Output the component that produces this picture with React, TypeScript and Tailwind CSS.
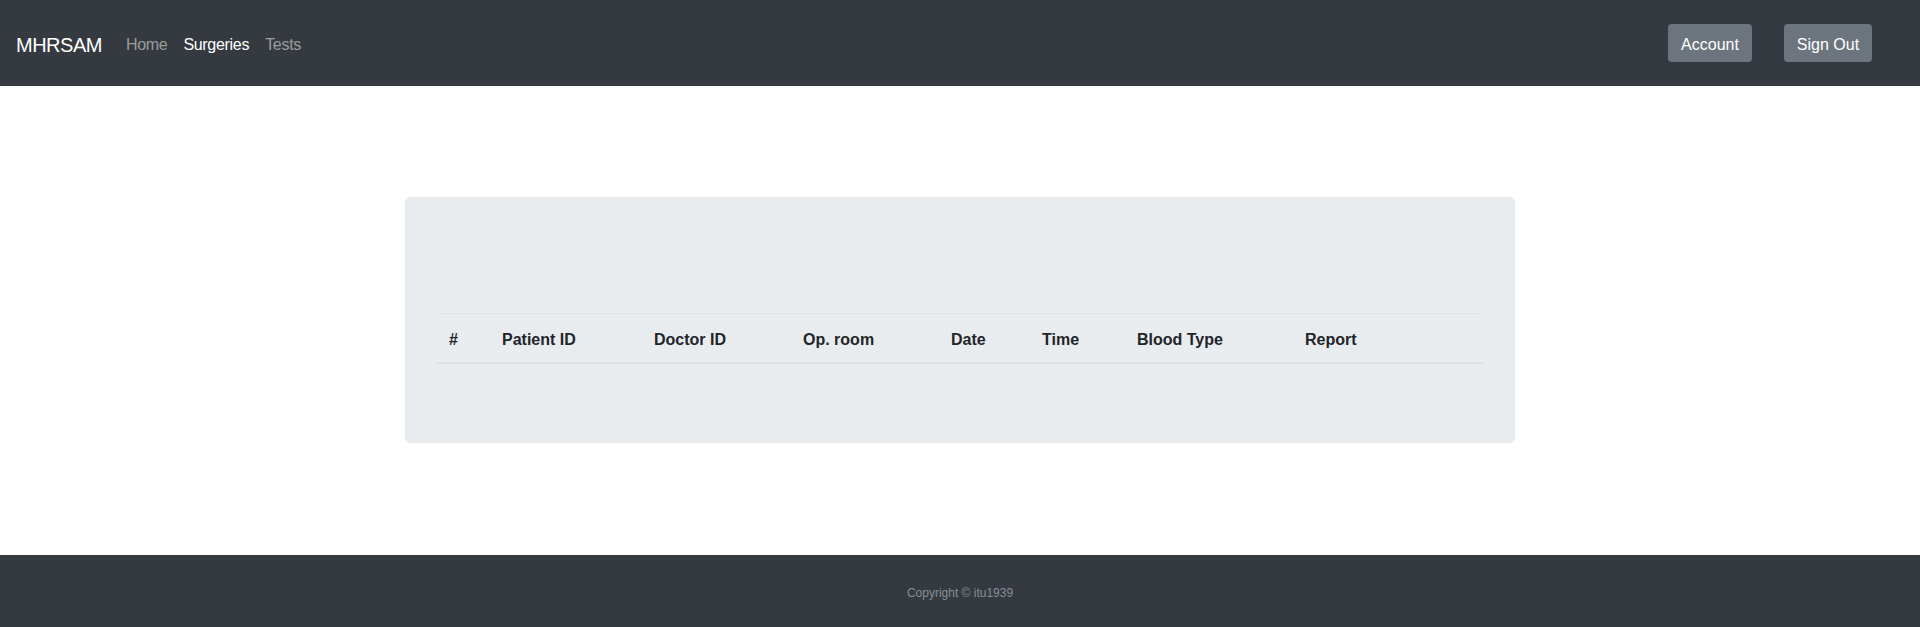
const columns = [
  { label: '#', width: 'w-[53px]' },
  { label: 'Patient ID', width: 'w-[152px]' },
  { label: 'Doctor ID', width: 'w-[149px]' },
  { label: 'Op. room', width: 'w-[148px]' },
  { label: 'Date', width: 'w-[91px]' },
  { label: 'Time', width: 'w-[95px]' },
  { label: 'Blood Type', width: 'w-[168px]' },
  { label: 'Report', width: 'w-[190px]' },
];

const App = () => {
  return (
    <div className="min-h-screen bg-white font-['Liberation_Sans',Arial,sans-serif] text-[#212529]">
      {/* Navbar */}
      <nav className="h-[86px] bg-[#343a40] flex items-center pl-4 pr-12">
        <a href="#" className="text-white text-[20px] leading-[30px] mr-4 pt-[4px] tracking-[-0.5px]">MHRSAM</a>
        <ul className="flex items-center text-[16px] leading-6 pt-[4px] tracking-[-0.3px]">
          <li><a href="#" className="px-2 text-white/50">Home</a></li>
          <li><a href="#" className="px-2 text-white">Surgeries</a></li>
          <li><a href="#" className="px-2 text-white/50">Tests</a></li>
        </ul>
        <div className="ml-auto flex items-center gap-8">
          <button className="w-[84px] h-[38px] pt-[4px] bg-[#6c757d] text-white text-[16px] rounded-[4px]">Account</button>
          <button className="w-[88px] h-[38px] pt-[4px] bg-[#6c757d] text-white text-[16px] rounded-[4px]">Sign Out</button>
        </div>
      </nav>

      {/* Surgeries list */}
      <main className="pt-[111px] pb-[112px]">
        <div className="w-[1110px] mx-auto bg-[#e9ecef] rounded-[5px] px-8 pt-[116px] pb-[79px]">
          <table className="w-full border-collapse text-left">
            <thead>
              <tr className="border-t border-[#dee2e6]">
                {columns.map((c) => (
                  <th
                    key={c.label}
                    className={`${c.width} px-3 pt-[14px] pb-[10px] text-[16px] leading-6 font-bold border-b-2 border-[#dee2e6]`}
                  >
                    {c.label}
                  </th>
                ))}
              </tr>
            </thead>
            <tbody></tbody>
          </table>
        </div>
      </main>

      {/* Footer */}
      <footer className="h-[72px] bg-[#343a40] flex items-center justify-center pt-[4px]">
        <span className="text-[12px] text-[#868e96]">Copyright © itu1939</span>
      </footer>
    </div>
  );
};

export default App;
